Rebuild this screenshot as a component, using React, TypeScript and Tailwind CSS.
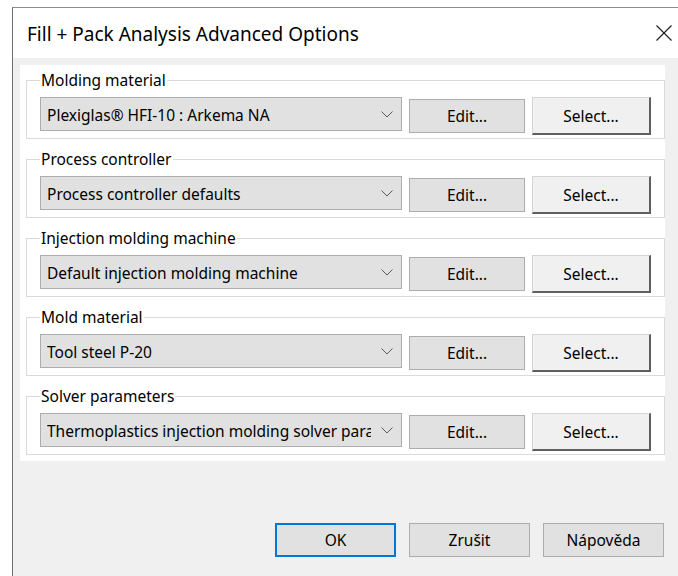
import React from "react";

type Group = { label: string; value: string };

const groups: Group[] = [
  { label: "Molding material", value: "Plexiglas\u00AE HFI-10 : Arkema NA" },
  { label: "Process controller", value: "Process controller defaults" },
  { label: "Injection molding machine", value: "Default injection molding machine" },
  { label: "Mold material", value: "Tool steel P-20" },
  { label: "Solver parameters", value: "Thermoplastics injection molding solver parameters" },
];

function Chevron() {
  return (
    <svg width="12" height="7" viewBox="0 0 12 7" className="shrink-0">
      <path d="M0.5 0.5 L6 6 L11.5 0.5" fill="none" stroke="#5a5a5a" strokeWidth="1" />
    </svg>
  );
}

function CloseIcon() {
  return (
    <svg width="16" height="16" viewBox="0 0 16 16">
      <path d="M0.5 0.5 L15.5 15.5 M15.5 0.5 L0.5 15.5" stroke="#1a1a1a" strokeWidth="1.1" fill="none" />
    </svg>
  );
}

function OptionGroup({ label, value }: Group) {
  return (
    <fieldset className="w-[634px] border border-[#dadada] px-[13px] pt-[7px] pb-[3px]">
      <legend className="px-[1px] text-[15.5px] leading-[20px] text-black">{label}</legend>
      <div className="flex items-start gap-[7px]">
        <div className="w-[362px] h-[34px] bg-[#e1e1e1] border border-[#adadad] flex items-center pl-[6px] pr-[8px]">
          <span className="flex-1 overflow-hidden whitespace-nowrap text-[15.5px] leading-[20px] mt-[2px] mr-[10px] text-black">
            {value}
          </span>
          <Chevron />
        </div>
        <div className="mt-[2px] w-[116px] h-[34px] bg-[#e1e1e1] border border-[#adadad] flex items-center justify-center text-[15.5px] leading-[20px] text-black">
          Edit...
        </div>
        <div className="w-[119px] h-[38px] bg-[#f0f0f0] border-t border-l border-t-[#d4d4d4] border-l-[#d4d4d4] border-r-2 border-b-2 border-r-[#5f5f5f] border-b-[#5f5f5f] flex items-center justify-center text-[15.5px] leading-[20px] text-black">
          Select...
        </div>
      </div>
    </fieldset>
  );
}

function DialogButton({ children, primary }: { children: React.ReactNode; primary?: boolean }) {
  return (
    <div
      className={
        primary
          ? "w-[121px] h-[34px] bg-[#e1e1e1] border-2 border-[#0078d7] flex items-center justify-center text-[15.5px] leading-[20px] text-black"
          : "w-[121px] h-[34px] bg-[#e1e1e1] border border-[#adadad] flex items-center justify-center text-[15.5px] leading-[20px] text-black"
      }
    >
      {children}
    </div>
  );
}

export default function App() {
  return (
    <div className="w-[678px] h-[576px] bg-white overflow-hidden pt-[7px] pl-[12px] font-['Noto_Sans',sans-serif]">
      <div className="w-[666px] h-[569px] border-l border-t border-l-[#6e6e6e] border-t-[#8c8c8c] flex flex-col">
        <div className="h-[50px] bg-white flex items-center justify-between pl-[14px] pr-[6px] shrink-0">
          <span className="text-[19px] text-black leading-[24px] mt-[1px]">Fill + Pack Analysis Advanced Options</span>
          <CloseIcon />
        </div>
        <div className="flex-1 bg-[#f0f0f0] pl-[7px] pt-[7px]">
          <div className="w-[645px] h-[396px] bg-white pt-[5px] pl-[6px] flex flex-col gap-[10px]">
            {groups.map((g) => (
              <OptionGroup key={g.label} {...g} />
            ))}
          </div>
          <div className="mt-[62px] ml-[255px] flex gap-[13px]">
            <DialogButton primary>OK</DialogButton>
            <DialogButton>Zrušit</DialogButton>
            <DialogButton>Nápověda</DialogButton>
          </div>
        </div>
      </div>
    </div>
  );
}
